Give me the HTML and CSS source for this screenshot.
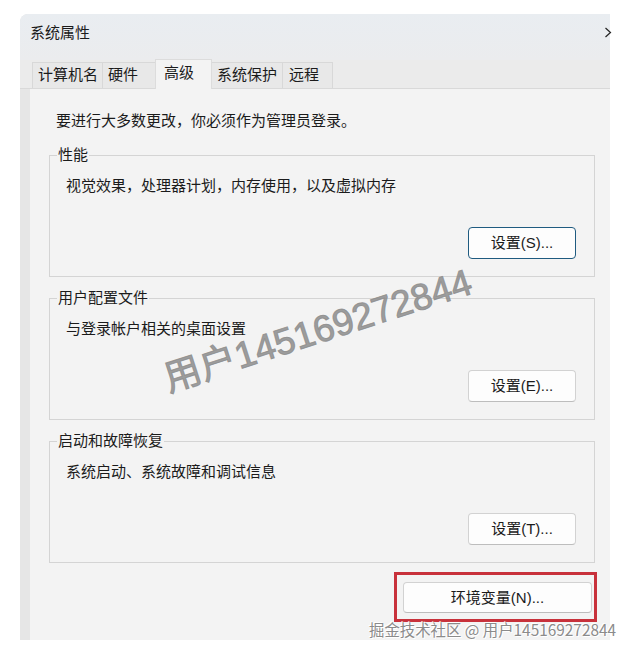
FILE: index.html
```html
<!DOCTYPE html>
<html lang="zh-CN">
<head>
<meta charset="utf-8">
<title>系统属性</title>
<link rel="stylesheet" href="styles.css">
</head>
<body>
<div class="window">
  <div class="titlebar">
    <span class="title">系统属性</span>
    <svg class="chev" width="8" height="11" viewBox="0 0 8 11"><path d="M1.5 1 L6.5 5.5 L1.5 10" fill="none" stroke="#222" stroke-width="1.2"/></svg>
  </div>
  <div class="tabs">
    <div class="tab tab-4">计算机名</div>
    <div class="tab tab-2">硬件</div>
    <div class="tab tab-active">高级</div>
    <div class="tab tab-4">系统保护</div>
    <div class="tab tab-2 tab-last">远程</div>
  </div>
  <div class="client">
    <div class="panel">
      <p class="intro">要进行大多数更改，你必须作为管理员登录。</p>
      <fieldset class="group">
        <legend>性能</legend>
        <p class="desc">视觉效果，处理器计划，内存使用，以及虚拟内存</p>
        <div class="actions"><button class="btn btn-default">设置(S)...</button></div>
      </fieldset>
      <fieldset class="group">
        <legend>用户配置文件</legend>
        <p class="desc">与登录帐户相关的桌面设置</p>
        <div class="actions"><button class="btn">设置(E)...</button></div>
      </fieldset>
      <fieldset class="group">
        <legend>启动和故障恢复</legend>
        <p class="desc">系统启动、系统故障和调试信息</p>
        <div class="actions"><button class="btn">设置(T)...</button></div>
      </fieldset>
      <div class="env-row">
        <div class="highlight"><button class="btn btn-env">环境变量(N)...</button></div>
      </div>
    </div>
  </div>
</div>
<div class="wm-diag">用户145169272844</div>
<div class="wm-foot">掘金技术社区 @ 用户145169272844</div>
</body>
</html>
```
FILE: styles.css
```css
* { box-sizing: border-box; }
html, body { margin: 0; padding: 0; background: #ffffff; }
body {
  width: 632px;
  height: 655px;
  overflow: hidden;
  font-family: "Liberation Sans", "Noto Sans CJK SC", sans-serif;
  font-size: 15px;
  line-height: 20px;
  color: #1b1b1b;
}
.window {
  margin: 14px 0 0 20px;
  width: 590px;
  height: 626px;
  background: #e6e6e6;
  border-top-left-radius: 8px;
  display: flex;
  flex-direction: column;
}
.titlebar {
  height: 46px;
  padding: 9px 0 0 10px;
  border-top-left-radius: 8px;
  background: linear-gradient(#e9edf1, #ebecee);
  display: flex;
  justify-content: space-between;
  align-items: flex-start;
}
.title { font-size: 15px; line-height: 20px; }
.chev { margin-top: 4px; margin-right: -2px; }
.tabs {
  height: 29px;
  padding-left: 12px;
  display: flex;
  align-items: flex-end;
  background: #ebebeb;
  border-bottom: 1px solid #d9d9d9;
}
.tab {
  height: 26px;
  line-height: 24px;
  font-size: 15px;
  background: #e8e8e8;
  border: 1px solid #d8d8d8;
  border-right: none;
  border-bottom: none;
  padding-left: 5px;
  white-space: nowrap;
}
.tab-4 { width: 70px; }
.tab-2 { width: 53px; }
.tab-last { width: 51px; border-right: 1px solid #d8d8d8; padding-left: 6px; }
.tab-active {
  width: 57px;
  height: 30px;
  line-height: 25px;
  margin-bottom: -1px;
  padding-left: 8px;
  background: #f3f3f3;
  border: 1px solid #dcdcdc;
  border-bottom: none;
}
.tab-active + .tab { border-left: none; }
.client {
  flex: 1;
  padding-left: 10px;
  display: flex;
}
.panel {
  flex: 1;
  background: #f3f3f3;
  padding: 22px 15px 0 19px;
  display: flex;
  flex-direction: column;
}
.intro { margin: 0 0 0 7px; }
.group {
  margin: 14px 0 0 0;
  padding: 0 18px 17px 8px;
  border: 1px solid #d4d4d4;
  min-width: 0;
}
.group + .group { margin-top: 11px; }
.group legend {
  padding: 0 1px;
  margin-left: -1px;
  line-height: 20px;
}
.desc { margin: 11px 0 0 8px; }
.actions {
  margin-top: 31px;
  display: flex;
  justify-content: flex-end;
}
.btn {
  font-family: inherit;
  font-size: 15px;
  line-height: 20px;
  color: #1b1b1b;
  width: 108px;
  height: 32px;
  padding: 0;
  background: #fdfdfd;
  border: 1px solid #d2d2d2;
  border-bottom-color: #bdbdbd;
  border-radius: 4px;
}
.btn-default { border-color: #1f5b80; }
.env-row {
  margin-top: 9px;
  margin-right: -2px;
  display: flex;
  justify-content: flex-end;
}
.highlight {
  border: 3px solid #c8313b;
  padding: 7px 2px 6px 6px;
}
.btn-env { width: 189px; height: 31px; }
.wm-diag {
  position: absolute;
  left: 318px;
  top: 331px;
  transform: translate(-50%, -50%) rotate(-18deg);
  font-family: "Liberation Sans", "Noto Sans CJK SC", sans-serif;
  font-weight: normal;
  font-size: 37px;
  line-height: 40px;
  color: rgba(140, 140, 140, 0.85);
  -webkit-text-stroke: 1px rgba(140, 140, 140, 0.85);
  white-space: nowrap;
}
.wm-foot {
  position: absolute;
  left: 369px;
  top: 619px;
  font-family: "Noto Sans CJK SC", sans-serif;
  font-size: 15.4px;
  line-height: 20px;
  color: #8b8b8b;
  white-space: nowrap;
  text-shadow: 0 0 2px #ffffff, 1px 1px 0 #ffffff, -1px -1px 0 #ffffff;
}
```
